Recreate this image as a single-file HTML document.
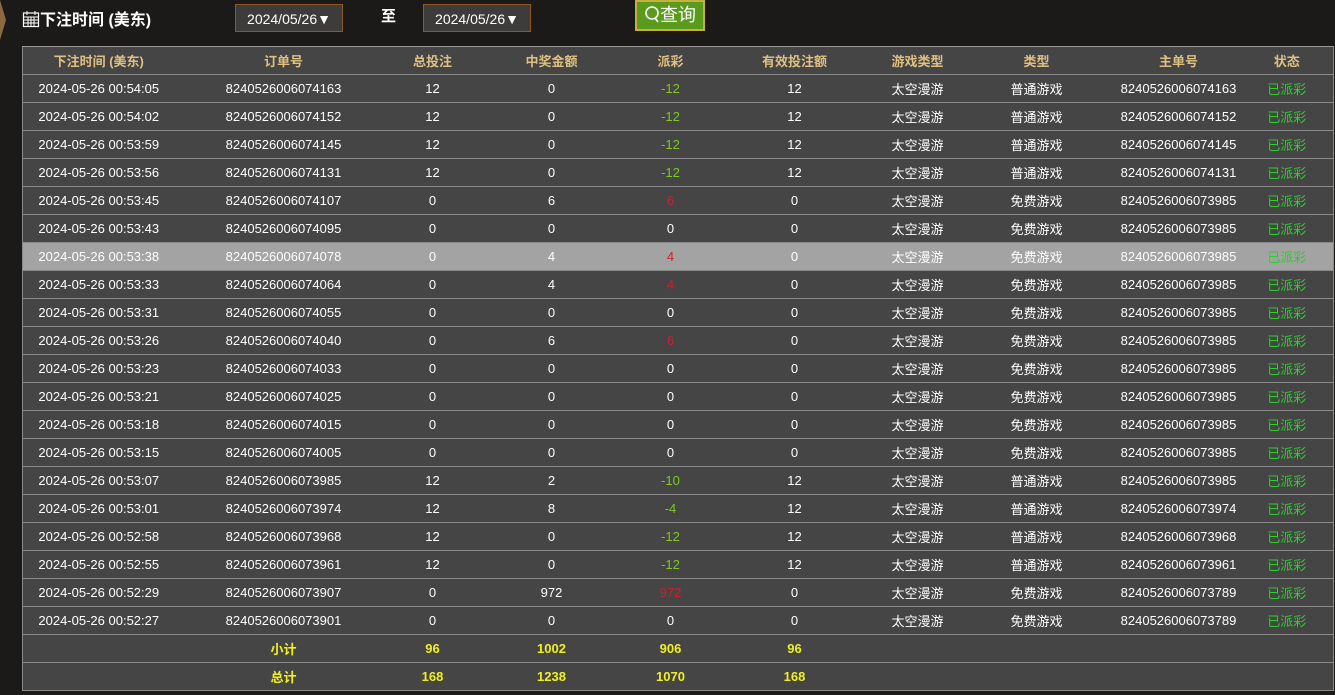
<!DOCTYPE html>
<html><head><meta charset="utf-8"><style>
body{margin:0;width:1335px;height:695px;background:#1b1a19;font-family:"Liberation Sans","Noto Sans CJK SC",sans-serif;overflow:hidden;position:relative}
.lb{position:absolute;left:0;top:0;width:6px;height:40px;background:#8a6a40;clip-path:polygon(0 0,100% 50%,0 100%)}
.title{position:absolute;left:22px;top:6px;color:#fff;font-weight:bold;font-size:16px}
.dd{position:absolute;top:4px;height:28px;width:108px;background:#3e3c3a;border:1px solid #8a5a20;color:#fff;font-size:14px;line-height:28px;text-align:center;box-sizing:border-box}
.to{position:absolute;left:381px;top:5px;color:#fff;font-weight:bold;font-size:15px}
.btn{position:absolute;left:635px;top:0;width:70px;height:31px;background:#5a9a1c;border:2px solid #c8b040;box-sizing:border-box;color:#fff;font-size:18px;line-height:27px;text-align:center}
table{position:absolute;left:22px;top:46px;width:1311px;border-collapse:collapse;background:#454545;table-layout:fixed;border:1px solid #8a8a8a}
td,th{height:27px;border-top:1px solid #8a8a8a;text-align:center;font-size:13px;color:#fff;padding:0;white-space:nowrap;overflow:hidden}
th{color:#e0c080;font-weight:bold;border-top:1px solid #9a9a9a}
.g{color:#7ec820}.r{color:#d02030}.s{color:#2ad02a}
tr.hl td{background:#a3a3a3}
tr.sum td{color:#f0f020;font-weight:bold}
</style></head><body>
<div class="lb"></div>
<div class="title"><svg width="18" height="18" viewBox="0 0 18 18" style="vertical-align:-3px"><rect x="1.5" y="3" width="15" height="13.5" fill="none" stroke="#fff" stroke-width="1.2"/><path d="M5 1v4M13 1v4M1.5 7h15M1.5 10h15M1.5 13h15M6 7v9.5M9 7v9.5M12 7v9.5" stroke="#fff" stroke-width="1"/></svg>下注时间 (美东)</div>
<div class="dd" style="left:235px">2024/05/26▼</div>
<div class="to">至</div>
<div class="dd" style="left:423px">2024/05/26▼</div>
<div class="btn"><svg width="16" height="18" viewBox="0 0 16 18" style="vertical-align:-2px"><circle cx="8" cy="8" r="6" fill="none" stroke="#fff" stroke-width="1.6"/><path d="M11 13l3 4" stroke="#fff" stroke-width="1.6"/></svg>查询</div>
<table>
<colgroup><col style="width:152px"><col style="width:218px"><col style="width:80px"><col style="width:158px"><col style="width:80px"><col style="width:168px"><col style="width:78px"><col style="width:160px"><col style="width:124px"><col style="width:93px"></colgroup>
<tr><th>下注时间 (美东)</th><th>订单号</th><th>总投注</th><th>中奖金额</th><th>派彩</th><th>有效投注额</th><th>游戏类型</th><th>类型</th><th>主单号</th><th>状态</th></tr>
<tr><td>2024-05-26 00:54:05</td><td>8240526006074163</td><td>12</td><td>0</td><td class="g">-12</td><td>12</td><td>太空漫游</td><td>普通游戏</td><td>8240526006074163</td><td class="s">已派彩</td></tr>
<tr><td>2024-05-26 00:54:02</td><td>8240526006074152</td><td>12</td><td>0</td><td class="g">-12</td><td>12</td><td>太空漫游</td><td>普通游戏</td><td>8240526006074152</td><td class="s">已派彩</td></tr>
<tr><td>2024-05-26 00:53:59</td><td>8240526006074145</td><td>12</td><td>0</td><td class="g">-12</td><td>12</td><td>太空漫游</td><td>普通游戏</td><td>8240526006074145</td><td class="s">已派彩</td></tr>
<tr><td>2024-05-26 00:53:56</td><td>8240526006074131</td><td>12</td><td>0</td><td class="g">-12</td><td>12</td><td>太空漫游</td><td>普通游戏</td><td>8240526006074131</td><td class="s">已派彩</td></tr>
<tr><td>2024-05-26 00:53:45</td><td>8240526006074107</td><td>0</td><td>6</td><td class="r">6</td><td>0</td><td>太空漫游</td><td>免费游戏</td><td>8240526006073985</td><td class="s">已派彩</td></tr>
<tr><td>2024-05-26 00:53:43</td><td>8240526006074095</td><td>0</td><td>0</td><td>0</td><td>0</td><td>太空漫游</td><td>免费游戏</td><td>8240526006073985</td><td class="s">已派彩</td></tr>
<tr class="hl"><td>2024-05-26 00:53:38</td><td>8240526006074078</td><td>0</td><td>4</td><td class="r">4</td><td>0</td><td>太空漫游</td><td>免费游戏</td><td>8240526006073985</td><td class="s">已派彩</td></tr>
<tr><td>2024-05-26 00:53:33</td><td>8240526006074064</td><td>0</td><td>4</td><td class="r">4</td><td>0</td><td>太空漫游</td><td>免费游戏</td><td>8240526006073985</td><td class="s">已派彩</td></tr>
<tr><td>2024-05-26 00:53:31</td><td>8240526006074055</td><td>0</td><td>0</td><td>0</td><td>0</td><td>太空漫游</td><td>免费游戏</td><td>8240526006073985</td><td class="s">已派彩</td></tr>
<tr><td>2024-05-26 00:53:26</td><td>8240526006074040</td><td>0</td><td>6</td><td class="r">6</td><td>0</td><td>太空漫游</td><td>免费游戏</td><td>8240526006073985</td><td class="s">已派彩</td></tr>
<tr><td>2024-05-26 00:53:23</td><td>8240526006074033</td><td>0</td><td>0</td><td>0</td><td>0</td><td>太空漫游</td><td>免费游戏</td><td>8240526006073985</td><td class="s">已派彩</td></tr>
<tr><td>2024-05-26 00:53:21</td><td>8240526006074025</td><td>0</td><td>0</td><td>0</td><td>0</td><td>太空漫游</td><td>免费游戏</td><td>8240526006073985</td><td class="s">已派彩</td></tr>
<tr><td>2024-05-26 00:53:18</td><td>8240526006074015</td><td>0</td><td>0</td><td>0</td><td>0</td><td>太空漫游</td><td>免费游戏</td><td>8240526006073985</td><td class="s">已派彩</td></tr>
<tr><td>2024-05-26 00:53:15</td><td>8240526006074005</td><td>0</td><td>0</td><td>0</td><td>0</td><td>太空漫游</td><td>免费游戏</td><td>8240526006073985</td><td class="s">已派彩</td></tr>
<tr><td>2024-05-26 00:53:07</td><td>8240526006073985</td><td>12</td><td>2</td><td class="g">-10</td><td>12</td><td>太空漫游</td><td>普通游戏</td><td>8240526006073985</td><td class="s">已派彩</td></tr>
<tr><td>2024-05-26 00:53:01</td><td>8240526006073974</td><td>12</td><td>8</td><td class="g">-4</td><td>12</td><td>太空漫游</td><td>普通游戏</td><td>8240526006073974</td><td class="s">已派彩</td></tr>
<tr><td>2024-05-26 00:52:58</td><td>8240526006073968</td><td>12</td><td>0</td><td class="g">-12</td><td>12</td><td>太空漫游</td><td>普通游戏</td><td>8240526006073968</td><td class="s">已派彩</td></tr>
<tr><td>2024-05-26 00:52:55</td><td>8240526006073961</td><td>12</td><td>0</td><td class="g">-12</td><td>12</td><td>太空漫游</td><td>普通游戏</td><td>8240526006073961</td><td class="s">已派彩</td></tr>
<tr><td>2024-05-26 00:52:29</td><td>8240526006073907</td><td>0</td><td>972</td><td class="r">972</td><td>0</td><td>太空漫游</td><td>免费游戏</td><td>8240526006073789</td><td class="s">已派彩</td></tr>
<tr><td>2024-05-26 00:52:27</td><td>8240526006073901</td><td>0</td><td>0</td><td>0</td><td>0</td><td>太空漫游</td><td>免费游戏</td><td>8240526006073789</td><td class="s">已派彩</td></tr>
<tr class="sum"><td></td><td>小计</td><td>96</td><td>1002</td><td>906</td><td>96</td><td></td><td></td><td></td><td></td></tr>
<tr class="sum"><td></td><td>总计</td><td>168</td><td>1238</td><td>1070</td><td>168</td><td></td><td></td><td></td><td></td></tr>
</table>
</body></html>
